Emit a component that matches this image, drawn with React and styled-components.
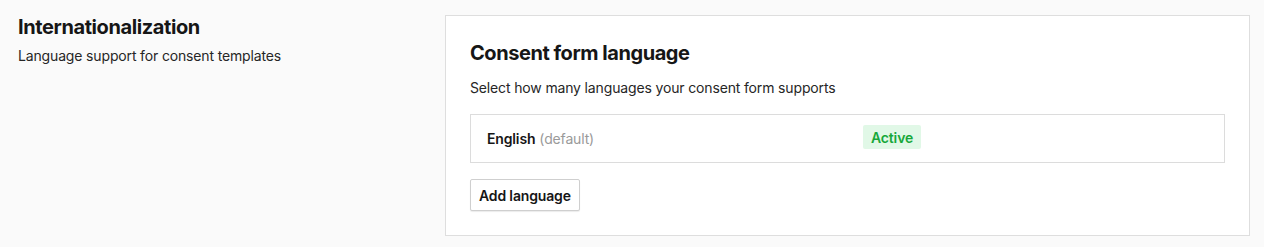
import React from "react";
import styled, { createGlobalStyle } from "styled-components";

const Global = createGlobalStyle`
  html, body { margin: 0; padding: 0; background: #fafafa; }
  body { font-family: Inter, "Noto Sans", sans-serif; color: #1a1a1a; -webkit-font-smoothing: antialiased; }
`;

const Page = styled.div`
  display: flex;
  align-items: flex-start;
  padding: 15px 14px 11px 18px;
  min-height: 247px;
  box-sizing: border-box;
`;

const Intro = styled.div`
  flex: 0 0 427px;
`;

const Title = styled.h2`
  margin: 0;
  font-size: 20px;
  line-height: 24px;
  letter-spacing: -0.4px;
  font-weight: 700;
  color: #161616;
`;

const Subtitle = styled.p`
  margin: 7px 0 0;
  font-size: 14px;
  line-height: 20px;
  letter-spacing: -0.15px;
  color: #262626;
`;

const Card = styled.section`
  flex: 1;
  background: #fff;
  border: 1px solid #dedede;
  padding: 25px 24px 24px;
`;

const CardTitle = styled.h3`
  margin: 0;
  font-size: 20px;
  line-height: 24px;
  letter-spacing: -0.45px;
  font-weight: 700;
  color: #161616;
`;

const CardText = styled.p`
  margin: 13px 0 0;
  font-size: 14px;
  line-height: 20px;
  letter-spacing: -0.15px;
  color: #262626;
`;

const LangList = styled.div`
  margin-top: 16px;
  border: 1px solid #dcdcdc;
`;

const LangRow = styled.div`
  display: grid;
  grid-template-columns: 376px 1fr;
  align-items: center;
  height: 47px;
  padding: 0 16px;
`;

const LangName = styled.span`
  font-size: 14px;
  letter-spacing: -0.15px;
  font-weight: 600;
  color: #161616;
`;

const Muted = styled.span`
  font-weight: 400;
  color: #9a9a9a;
  margin-left: 4px;
`;

const Badge = styled.span`
  justify-self: start;
  margin-top: -3px;
  display: inline-flex;
  align-items: center;
  height: 24px;
  padding: 0 8px;
  border-radius: 2px;
  background: ${(p) => (p.$tone === "success" ? "#e1f8e7" : "#eee")};
  color: ${(p) => (p.$tone === "success" ? "#17a83a" : "#555")};
  font-size: 14px;
  letter-spacing: -0.15px;
  font-weight: 600;
`;

const Button = styled.button`
  display: block;
  margin-top: 16px;
  height: 32px;
  padding: 0 8px;
  background: #fff;
  border: 1px solid #cfcfcf;
  border-radius: 2px;
  box-shadow: 0 1px 1px rgba(0, 0, 0, 0.08);
  font-family: inherit;
  font-size: 14px;
  letter-spacing: -0.15px;
  font-weight: 600;
  color: #161616;
  cursor: pointer;
`;

export default function App() {
  return (
    <>
      <Global />
      <Page>
        <Intro>
          <Title>Internationalization</Title>
          <Subtitle>Language support for consent templates</Subtitle>
        </Intro>
        <Card>
          <CardTitle>Consent form language</CardTitle>
          <CardText>Select how many languages your consent form supports</CardText>
          <LangList>
            <LangRow>
              <LangName>
                English<Muted>(default)</Muted>
              </LangName>
              <Badge $tone="success">Active</Badge>
            </LangRow>
          </LangList>
          <Button>Add language</Button>
        </Card>
      </Page>
    </>
  );
}
